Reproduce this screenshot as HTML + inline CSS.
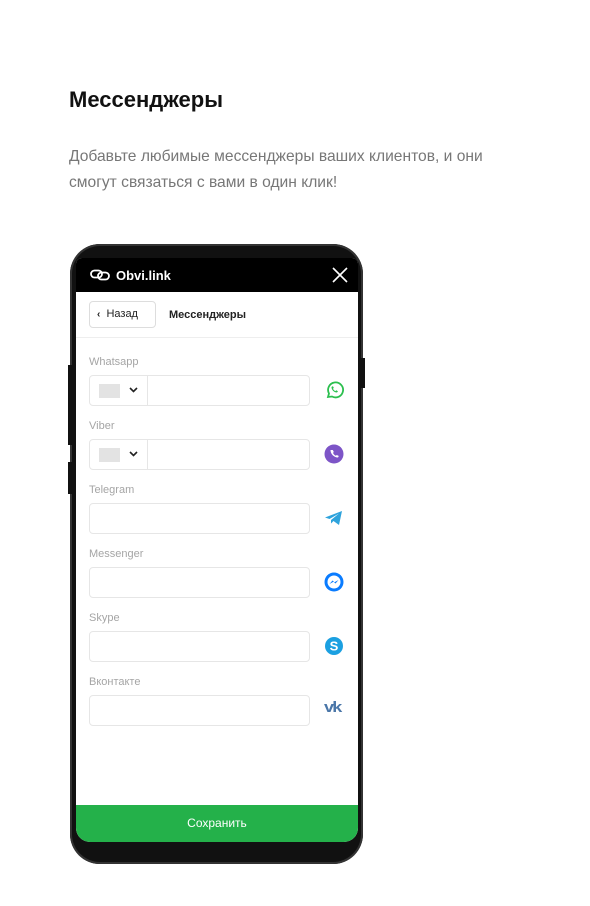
<!DOCTYPE html>
<html><head><meta charset="utf-8"><style>
*{margin:0;padding:0;box-sizing:border-box}
body{width:590px;height:906px;background:#fff;font-family:"Liberation Sans",sans-serif;position:relative;overflow:hidden}
h1{position:absolute;left:69px;top:87px;font-size:22px;font-weight:bold;color:#111}
.p{position:absolute;left:69px;top:144px;width:460px;font-size:15.6px;line-height:26px;color:#777}
.phone{position:absolute;left:70px;top:244px;width:293px;height:620px;background:#111;border-radius:30px;box-shadow:inset 0 0 0 2px #333}
.btn{position:absolute;background:#111;width:4px}
.screen{position:absolute;left:76px;top:258px;width:282px;height:584px;border-radius:6px 6px 14px 14px;overflow:hidden;background:#fff}
.bar{height:34px;background:#000;color:#fff;font-weight:bold;font-size:13px;position:relative}
.cont{position:absolute;top:34px;left:0;right:0;bottom:37px;background:#fff}
.save{position:absolute;bottom:0;left:0;right:0;height:37px;background:#24b14a;color:#fff;font-size:12px;text-align:center;line-height:37px}
.lbl{position:absolute;left:13px;font-size:11px;color:#a5a5a5}
.inp{position:absolute;left:13px;width:221px;height:31px;border:1px solid #e6e6e6;border-radius:4px;background:#fff}
.cc{position:absolute;left:0;top:0;width:58px;height:29px;border-right:1px solid #e6e6e6}
.cc .f{position:absolute;left:9px;top:8px;width:21px;height:14px;background:#e3e3e3}
.ic{position:absolute;left:248px}
</style></head><body>
<h1>Мессенджеры</h1>
<div class="p">Добавьте любимые мессенджеры ваших клиентов, и они смогут связаться с вами в один клик!</div>
<div class="phone"></div>
<div class="btn" style="left:68px;top:365px;height:80px"></div>
<div class="btn" style="left:68px;top:462px;height:32px"></div>
<div class="btn" style="left:361px;top:358px;height:30px"></div>
<div class="screen">
 <div class="bar">
  <svg style="position:absolute;left:14px;top:11px" width="20" height="12" viewBox="0 0 20 12"><rect x="1" y="1.5" width="11" height="7" rx="3.5" fill="none" stroke="#fff" stroke-width="1.8"/><rect x="8" y="3.5" width="11" height="7" rx="3.5" fill="none" stroke="#fff" stroke-width="1.8"/></svg>
  <span style="position:absolute;left:40px;top:10px">Obvi.link</span>
  <svg style="position:absolute;left:256px;top:9px" width="16" height="16"><path d="M1 1L15 15M15 1L1 15" stroke="#fff" stroke-width="1.6"/></svg>
 </div>
 <div class="cont">
  <div style="position:absolute;left:13px;top:9px;width:67px;height:27px;border:1px solid #ddd;border-radius:4px;font-size:11px;line-height:25px;padding-left:7px;color:#222"><b style="font-size:10px">‹</b>&nbsp; Назад</div>
  <div style="position:absolute;left:93px;top:17px;font-size:11px;font-weight:bold;color:#222">Мессенджеры</div>
  <div style="position:absolute;left:0;right:0;top:45px;border-top:1px solid #eee"></div>
  <div class="lbl" style="top:64px">Whatsapp</div>
  <div class="inp" style="top:83px"><div class="cc"><div class="f"></div><svg style="position:absolute;left:39px;top:11px" width="9" height="6"><path d="M1 1L4.5 4.5L8 1" stroke="#222" stroke-width="1.6" fill="none"/></svg></div></div>
  <svg class="ic" style="top:88px" width="20" height="20" viewBox="0 0 20 20"><path d="M4 17L5 13.5A7.5 7.5 0 1 1 8 16.5Z" fill="none" stroke="#2bbf4e" stroke-width="1.8"/><path d="M7.5 7c0 3 2.5 5.5 5.5 5.5l1-1.3-1.8-.9-.8.8c-1-.4-2-1.4-2.4-2.4l.8-.8-.9-1.8z" fill="#2bbf4e"/></svg>
  <div class="lbl" style="top:128px">Viber</div>
  <div class="inp" style="top:147px"><div class="cc"><div class="f"></div><svg style="position:absolute;left:39px;top:11px" width="9" height="6"><path d="M1 1L4.5 4.5L8 1" stroke="#222" stroke-width="1.6" fill="none"/></svg></div></div>
  <svg class="ic" style="top:152px" width="20" height="20"><circle cx="10" cy="10" r="9.5" fill="#7d55c7"/><path d="M6.5 6c0 4 3.5 7.5 7.5 7.5l.8-1.5-2-1-.9.8c-1.3-.5-2.4-1.6-2.9-2.9l.8-.9-1-2z" fill="#fff"/></svg>
  <div class="lbl" style="top:192px">Telegram</div>
  <div class="inp" style="top:211px"></div>
  <svg class="ic" style="top:218px" width="20" height="16"><path d="M1 7.5L18 1L15 15L9.5 11L7 13.5L7 10L15 3.5L5.5 9Z" fill="#2ea3dc"/></svg>
  <div class="lbl" style="top:256px">Messenger</div>
  <div class="inp" style="top:275px"></div>
  <svg class="ic" style="top:280px" width="20" height="20"><circle cx="10" cy="10" r="9.5" fill="#0a7cff"/><circle cx="10" cy="10" r="6.5" fill="#fff"/><path d="M5.5 12L8.5 8.5L10.5 10.2L14.5 8L11.5 11.5L9.5 9.8Z" fill="#0a7cff"/></svg>
  <div class="lbl" style="top:320px">Skype</div>
  <div class="inp" style="top:339px"></div>
  <svg class="ic" style="top:344px" width="20" height="20"><circle cx="10" cy="10" r="9" fill="#1ba0e1"/><text x="10" y="14.5" font-family="Liberation Sans" font-weight="bold" font-size="13" fill="#fff" text-anchor="middle">S</text></svg>
  <div class="lbl" style="top:384px">Вконтакте</div>
  <div class="inp" style="top:403px"></div>
  <div class="ic" style="top:407px;font-weight:900;font-size:15px;color:#4a76a8;letter-spacing:-1.5px;transform:scaleX(1.2);transform-origin:left">vk</div>
 </div>
 <div class="save">Сохранить</div>
</div>
</body></html>
